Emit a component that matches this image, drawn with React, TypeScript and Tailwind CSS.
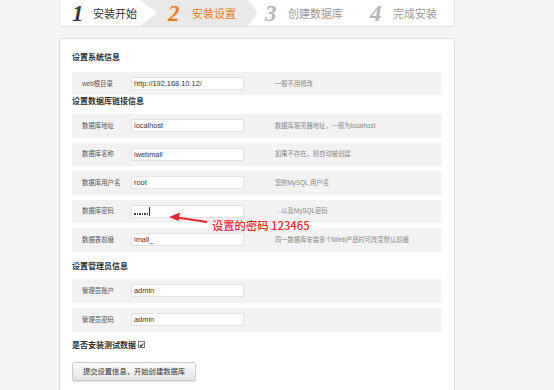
import React from "react";

type RowProps = { label: string; value: React.ReactNode; hint: string; h?: string; mt?: string };

function Row({ label, value, hint, h = "h-[23.5px]", mt = "" }: RowProps) {
  return (
    <div className={`flex items-center bg-[#f2f2f2] ${h} ${mt}`}>
      <div className="w-[59px] shrink-0 pl-[10px] text-[6.4px] leading-[8px] text-[#555] whitespace-nowrap">{label}</div>
      <div className="w-[113px] h-[13px] shrink-0 bg-white border border-[#e2e2e2] pl-[2px] text-[7.4px] leading-[11px] text-[#333] flex items-center">
        {value}
      </div>
      <div className="ml-[31px] text-[6.3px] leading-[8px] text-[#888] whitespace-nowrap">{hint}</div>
    </div>
  );
}

export default function App() {
  const dots = [0, 1, 2, 3, 4, 5];
  return (
    <div className="relative min-h-[390px] h-[390px] overflow-hidden bg-[#f5f5f5] font-['Liberation_Sans','Noto_Sans_CJK_SC',sans-serif]">
      <div className="ml-[59px] w-[396px]">
        {/* step bar */}
        <div className="h-[27px] bg-white border-x border-b border-[#e2e2e2] rounded-b-[3px] flex items-stretch overflow-hidden">
          <div className="w-[80px] shrink-0 flex items-center pl-[12px]">
            <span className="font-['Liberation_Serif',serif] italic font-bold text-[23px] leading-none text-[#3a3a3a] w-[14px]">1</span>
            <span className="ml-[7px] text-[11px] text-[#333] font-['Noto_Sans_CJK_SC',sans-serif]">安装开始</span>
          </div>
          <div className="w-[118px] shrink-0 flex items-center pl-[28px] bg-[#e9e9e9] [clip-path:polygon(0_0,108px_0,118px_50%,108px_100%,0_100%,17px_50%)]">
            <span className="font-['Liberation_Serif',serif] italic font-bold text-[23px] leading-none text-[#f07d13] w-[17px]">2</span>
            <span className="ml-[7px] text-[11px] text-[#f07d13] font-['Noto_Sans_CJK_SC',sans-serif]">安装设置</span>
          </div>
          <div className="w-[104px] shrink-0 flex items-center pl-[7px]">
            <span className="font-['Liberation_Serif',serif] italic font-bold text-[23px] leading-none text-[#b5b5b5] w-[16px]">3</span>
            <span className="ml-[7px] text-[11px] text-[#999] font-['Noto_Sans_CJK_SC',sans-serif]">创建数据库</span>
          </div>
          <div className="flex items-center pl-[8px]">
            <span className="font-['Liberation_Serif',serif] italic font-bold text-[23px] leading-none text-[#b5b5b5] w-[16px]">4</span>
            <span className="ml-[7px] text-[11px] text-[#999] font-['Noto_Sans_CJK_SC',sans-serif]">完成安装</span>
          </div>
        </div>

        {/* main panel */}
        <div className="mt-[11px] bg-white border border-[#dedede] rounded-[3px] px-[12px] pt-[12px] h-[400px] shadow-[0_0_2px_rgba(0,0,0,0.06)]">
          <div className="h-[12px] leading-[12px] text-[8px] font-bold text-[#333] font-['Noto_Sans_CJK_SC',sans-serif]">设置系统信息</div>
          <Row mt="mt-[9px]" h="h-[23px]" label="web根目录" value="http://192.168.10.12/" hint="一般不用修改" />
          <div className="h-[11px] leading-[11px] text-[8px] font-bold text-[#333] font-['Noto_Sans_CJK_SC',sans-serif]">设置数据库链接信息</div>
          <Row mt="mt-[8px]" label="数据库地址" value="localhost" hint="数据库服务器地址，一般为localhost" />
          <Row mt="mt-[5px]" label="数据库名称" value="iwebmall" hint="如果不存在，则自动被创建" />
          <Row mt="mt-[5px]" label="数据库用户名" value="root" hint="您的MySQL 用户名" />
          <Row
            mt="mt-[5px]"
            label="数据库密码"
            value={
              <span className="flex items-end h-[9px]">
                {dots.map((d) => (
                  <span key={d} className="w-[1.5px] h-[1.5px] mr-[1px] mb-[1px] bg-[#444]" />
                ))}
                <span className="w-px h-[9px] bg-[#333]" />
              </span>
            }
            hint="…以及MySQL密码"
          />
          <Row mt="mt-[5px]" label="数据表前缀" value="imall_" hint="同一数据库安装多个iWeb产品时可改变默认前缀" />

          <div className="mt-[8px] h-[12px] leading-[12px] text-[8px] font-bold text-[#333] font-['Noto_Sans_CJK_SC',sans-serif]">设置管理员信息</div>
          <Row mt="mt-[7px]" h="h-[24px]" label="管理员账户" value="admin" hint="" />
          <Row mt="mt-[5px]" h="h-[24px]" label="管理员密码" value="admin" hint="" />

          <div className="mt-[7px] flex items-center h-[12px]">
            <span className="text-[8px] leading-[12px] font-bold text-[#333] font-['Noto_Sans_CJK_SC',sans-serif]">是否安装测试数据</span>
            <span className="ml-[2px] w-[7px] h-[7px] border border-[#777] bg-white flex items-center justify-center">
              <svg width="6" height="6" viewBox="0 0 6 6">
                <path d="M1 3 L2.4 4.6 L5 1.2" stroke="#222" strokeWidth="1.3" fill="none" />
              </svg>
            </span>
          </div>

          <button className="mt-[11px] w-[124px] h-[19px] border border-[#c9c9c9] rounded-[2px] bg-[linear-gradient(#fbfbfb,#e4e4e4)] shadow-[0_1px_1px_rgba(0,0,0,0.12)] text-[7.3px] text-[#333] font-['Noto_Sans_CJK_SC',sans-serif] flex items-center justify-center">
            提交设置信息，开始创建数据库
          </button>
        </div>
      </div>

      {/* annotation overlay */}
      <svg className="absolute left-[165px] top-[208px]" width="50" height="20" viewBox="0 0 50 20">
        <path d="M42 14 L12 9.5" stroke="#e8262d" strokeWidth="2" fill="none" />
        <path d="M4 9 L15 4.5 L13.5 13 Z" fill="#e8262d" />
      </svg>
      <div className="absolute left-[212px] top-[218px] text-[11.3px] leading-[15px] text-[#e8262d] font-['Noto_Sans_CJK_SC',sans-serif] font-medium whitespace-nowrap">
        设置的密码 123465
      </div>
    </div>
  );
}
